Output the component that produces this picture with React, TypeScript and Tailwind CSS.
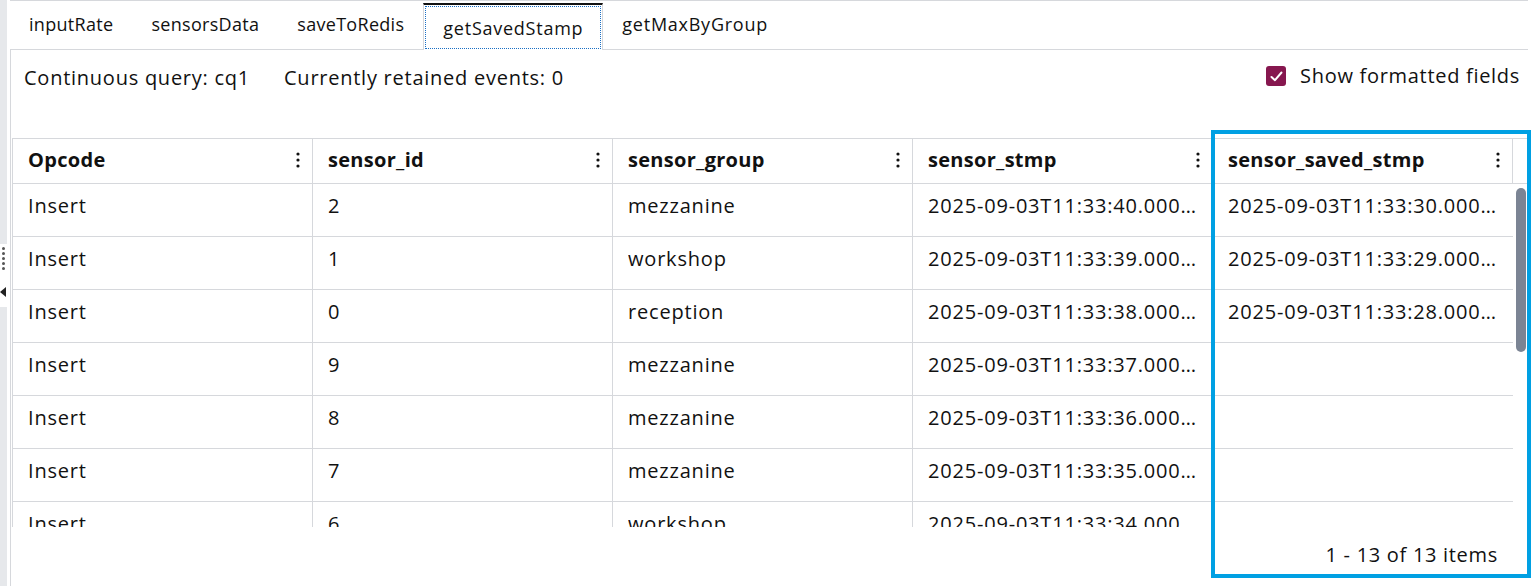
import React from "react";

const FONT = { fontFamily: "'Open Sans', Lato, sans-serif" };

const TABS = ["inputRate", "sensorsData", "saveToRedis", "getSavedStamp", "getMaxByGroup"];
const ACTIVE = "getSavedStamp";

const COLS = ["Opcode", "sensor_id", "sensor_group", "sensor_stmp", "sensor_saved_stmp"];

const ROWS: [string, string, string, string, string][] = [
  ["Insert", "2", "mezzanine", "2025-09-03T11:33:40.000000", "2025-09-03T11:33:30.000000"],
  ["Insert", "1", "workshop", "2025-09-03T11:33:39.000000", "2025-09-03T11:33:29.000000"],
  ["Insert", "0", "reception", "2025-09-03T11:33:38.000000", "2025-09-03T11:33:28.000000"],
  ["Insert", "9", "mezzanine", "2025-09-03T11:33:37.000000", ""],
  ["Insert", "8", "mezzanine", "2025-09-03T11:33:36.000000", ""],
  ["Insert", "7", "mezzanine", "2025-09-03T11:33:35.000000", ""],
  ["Insert", "6", "workshop", "2025-09-03T11:33:34.000000", ""],
];

function Kebab() {
  return (
    <svg width="4" height="16" viewBox="0 0 4 16" className="shrink-0">
      <circle cx="2" cy="2" r="1.6" fill="#111" />
      <circle cx="2" cy="8" r="1.6" fill="#111" />
      <circle cx="2" cy="14" r="1.6" fill="#111" />
    </svg>
  );
}

export default function App() {
  return (
    <div className="relative flex h-[586px] w-[1535px] overflow-hidden bg-white text-[#111]" style={FONT}>
      {/* left splitter */}
      <div className="flex w-[10px] shrink-0 flex-col">
        <div className="h-[244px] w-[7px] bg-[#e6e8eb]" />
        <div className="flex w-[7px] flex-col items-center gap-[2px] py-[3px]">
          {[0, 1, 2, 3, 4].map((i) => (
            <span key={i} className="h-[3px] w-[3px] rounded-full bg-[#555]" />
          ))}
        </div>
        <div className="h-[12px]" />
        <svg width="7" height="10" viewBox="0 0 7 10" className="mt-[2px]">
          <path d="M6 0 L0 5 L6 10 Z" fill="#222" />
        </svg>
        <div className="h-[10px]" />
        <div className="w-[7px] flex-1 bg-[#e6e8eb]" />
      </div>

      <div className="flex w-[1518px] flex-col">
        {/* tab strip */}
        <div className="flex h-[49px] items-end border-t border-[#d6d8dc]">
          {TABS.map((t) =>
            t === ACTIVE ? (
              <div
                key={t}
                className="relative -mb-px flex h-[47px] items-center border-x border-t-[2px] border-x-[#d6d8dc] border-t-[#111] bg-white px-[19px] pt-[1px]"
              >
                <div className="pointer-events-none absolute inset-[1px] border border-dotted border-[#1a6fc4]" />
                <span className="text-[18px] tracking-[0.75px]">{t}</span>
              </div>
            ) : (
              <div key={t} className="flex h-full items-center px-[19px] pb-[2px]">
                <span className={"text-[18px] " + (t === "getMaxByGroup" ? "tracking-[0.75px]" : "tracking-[0.3px]")}>
                  {t}
                </span>
              </div>
            )
          )}
        </div>

        {/* panel */}
        <div className="flex flex-1 flex-col border-l border-t border-[#d6d8dc]">
          <div className="flex h-[88px] items-start justify-between pl-[13px] pr-[8px] pt-[13px]">
            <div className="flex gap-[34px] text-[20px] tracking-[0.75px]">
              <span>Continuous query: cq1</span>
              <span>Currently retained events: 0</span>
            </div>
            <label className="-mt-[2px] flex items-center gap-[14px] text-[20px] tracking-[0.7px]">
              <span className="flex h-[20px] w-[20px] items-center justify-center rounded-[3px] bg-[#86174f]">
                <svg width="13" height="11" viewBox="0 0 13 11">
                  <path d="M1.5 6 L5 9.2 L11.5 1.5" stroke="white" strokeWidth="2" fill="none" strokeLinecap="round" strokeLinejoin="round" />
                </svg>
              </span>
              Show formatted fields
            </label>
          </div>

          {/* grid */}
          <div className="ml-px flex w-[1516px] flex-col border-t border-[#d6d8dc]">
            <div className="flex h-[45px] border-b border-[#d6d8dc]">
              {COLS.map((c) => (
                <div
                  key={c}
                  className="flex h-full w-[300px] items-center justify-between border-l border-[#d6d8dc] pb-[2px] pl-[15px] pr-[12px]"
                >
                  <span className="text-[20px] font-bold tracking-[0.3px]">{c}</span>
                  <Kebab />
                </div>
              ))}
              <div className="flex-1 border-l border-[#d6d8dc]" />
            </div>
            <div className="flex h-[343px] overflow-hidden">
              <div className="flex w-[1501px] flex-col">
                {ROWS.map((r, ri) => (
                  <div key={ri} className="flex h-[53px] shrink-0 border-b border-[#d6d8dc]">
                    {r.map((v, ci) => (
                      <div
                        key={ci}
                        className={
                          "flex shrink-0 items-center border-l border-[#d6d8dc] pb-[9px] pl-[15px] pr-[14px] " +
                          (ci === 4 ? "w-[301px]" : "w-[300px]")
                        }
                      >
                        <span className="truncate text-[20px] tracking-[0.8px]">{v}</span>
                      </div>
                    ))}
                  </div>
                ))}
              </div>
              <div className="flex w-[15px] justify-center pt-[4px]">
                <div className="h-[164px] w-[10px] rounded-full bg-[#7b8494]" />
              </div>
            </div>
            <div className="flex h-[55px] items-center justify-end pb-[0px] pr-[30px]">
              <span className="text-[20px] tracking-[0.7px]">1 - 13 of 13 items</span>
            </div>
          </div>
        </div>
      </div>

      {/* highlight annotation */}
      <div className="pointer-events-none absolute left-[1211px] top-[130px] h-[448px] w-[320px] border-4 border-[#00a0e3]" />
    </div>
  );
}
